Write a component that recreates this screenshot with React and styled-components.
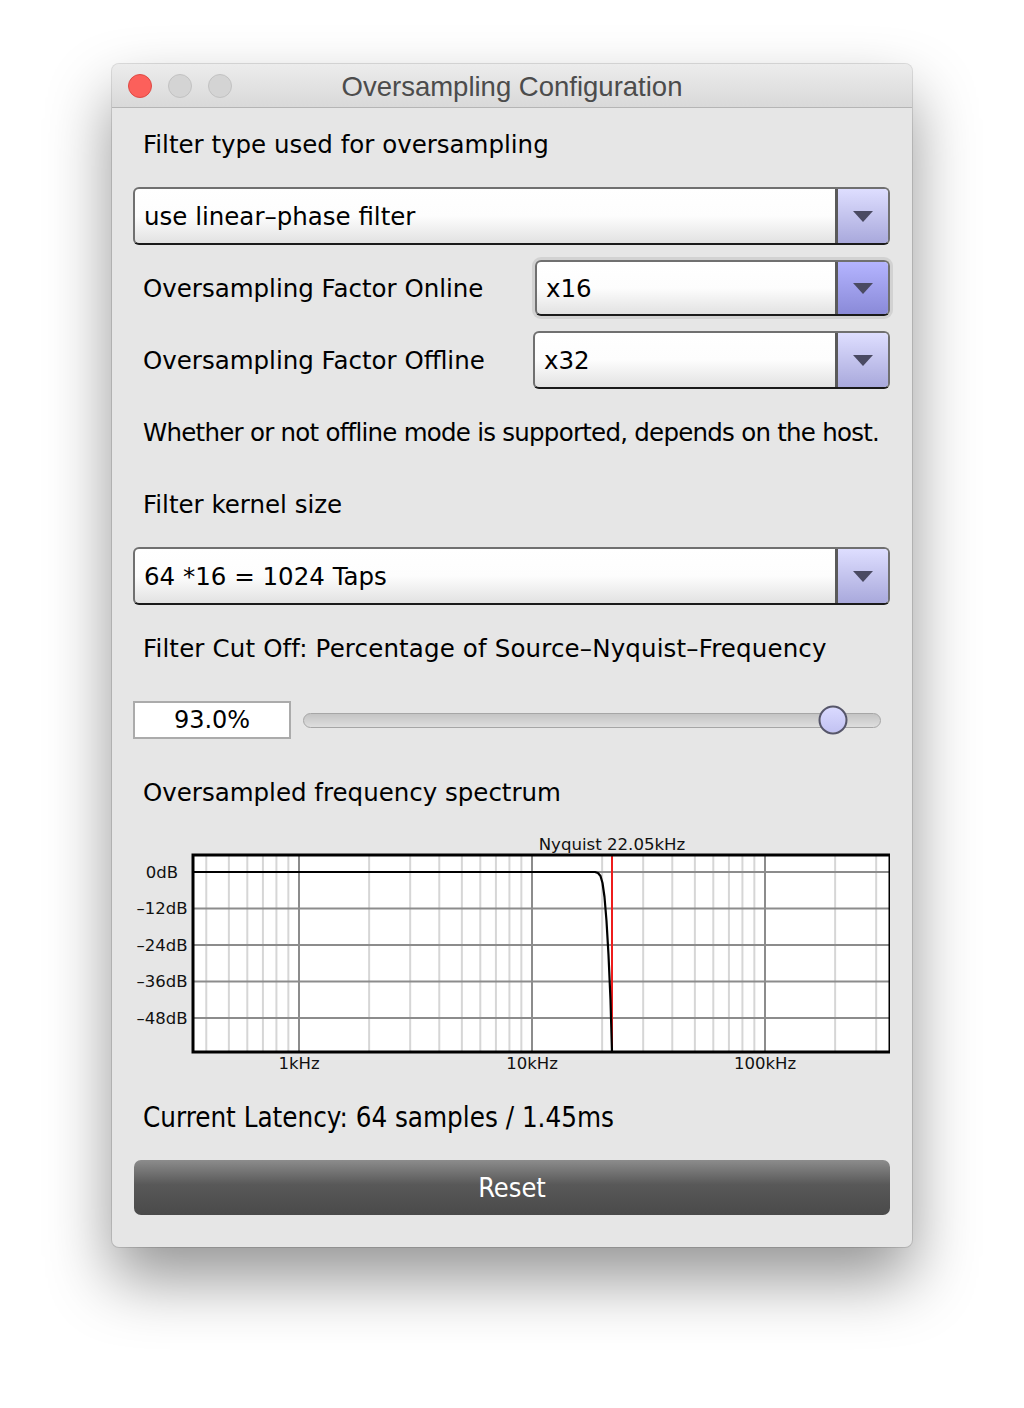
import React from "react";
import styled, { createGlobalStyle } from "styled-components";

const GlobalStyle = createGlobalStyle`
  html, body {
    margin: 0;
    padding: 0;
    background: #ffffff;
  }
  body {
    font-family: "DejaVu Sans", "Liberation Sans", sans-serif;
  }
`;

// chart geometry (pixels inside the plot area)
const PLOT_W = 697;
const PLOT_H = 197;
const DECADE = 233;
const X_1K = 106;
const xFor = (hz) => X_1K + DECADE * Math.log10(hz / 1000);
const yFor = (db) => 17 + (-db * 36.5) / 12;

const minorFreqs = [
  400, 500, 600, 700, 800, 900,
  2000, 3000, 4000, 5000, 6000, 7000, 8000, 9000,
  20000, 30000, 40000, 50000, 60000, 70000, 80000, 90000,
  200000, 300000,
];
const majorFreqs = [
  { hz: 1000, label: "1kHz" },
  { hz: 10000, label: "10kHz" },
  { hz: 100000, label: "100kHz" },
];
const dbLines = [0, -12, -24, -36, -48];

const TEXT_SIZE = 24.5;

const Page = styled.div`
  padding: 64px 0 160px 112px;
`;

const Window = styled.div`
  width: 800px;
  height: 1183px;
  background: #e6e6e6;
  border-radius: 7px;
  box-shadow: 0 0 0 1px rgba(0, 0, 0, 0.12), 0 32px 64px rgba(0, 0, 0, 0.42);
  display: flex;
  flex-direction: column;
  overflow: hidden;
`;

const TitleBar = styled.div`
  position: relative;
  height: 43px;
  flex-shrink: 0;
  display: flex;
  align-items: center;
  justify-content: center;
  background: linear-gradient(#ececec, #d9d9d9);
  border-bottom: 1px solid #b5b5b5;
`;

const Lights = styled.div`
  position: absolute;
  left: 16px;
  top: 10px;
  display: flex;
  gap: 16px;
`;

const Light = styled.span`
  width: 24px;
  height: 24px;
  border-radius: 50%;
  box-sizing: border-box;
  background: ${(p) => (p.$red ? "#fc605b" : "#d4d4d4")};
  border: 1px solid ${(p) => (p.$red ? "#de4a44" : "#c2c2c2")};
`;

const Title = styled.div`
  font-family: "Liberation Sans", Arial, sans-serif;
  font-size: 27.5px;
  color: #4c4c4c;
  margin-top: 3px;
`;

const Content = styled.div`
  display: flex;
  flex-direction: column;
  padding: 0 22px 0 21px;
`;

const Label = styled.div`
  height: 36px;
  line-height: 36px;
  margin-top: ${(p) => p.$mt}px;
  padding-left: 10px;
  font-size: ${TEXT_SIZE}px;
  letter-spacing: ${(p) => p.$spacing || 0}px;
  color: #000;
  white-space: nowrap;
`;

const ComboBox = styled.div`
  box-sizing: border-box;
  height: ${(p) => p.$h || 58}px;
  width: ${(p) => (p.$w ? `${p.$w}px` : "auto")};
  margin-top: ${(p) => p.$mt || 0}px;
  display: flex;
  border: 2px solid #707070;
  border-bottom-color: #1a1a1a;
  border-radius: 6px;
  overflow: hidden;
  background: linear-gradient(#ffffff 0%, #fdfdfd 50%, #e2e2e2 100%);
  box-shadow: ${(p) => (p.$focus ? "0 0 0 3px #d2d2d2" : "none")};
  flex-shrink: 0;
`;

const ComboText = styled.div`
  flex: 1;
  display: flex;
  align-items: center;
  padding-left: 9px;
  font-size: ${TEXT_SIZE}px;
  color: #000;
`;

const ComboArrow = styled.div`
  width: 50px;
  display: flex;
  align-items: center;
  justify-content: center;
  border-left: 3px solid #5a5a5a;
  background: ${(p) =>
    p.$active
      ? "linear-gradient(#b4b4ff, #8a8ad8)"
      : "linear-gradient(#dedeff, #a9a9dc)"};
  &::after {
    content: "";
    border-left: 10px solid transparent;
    border-right: 10px solid transparent;
    border-top: 11px solid #4a4a62;
    margin-top: 1px;
  }
`;

const Row = styled.div`
  display: flex;
  align-items: center;
  justify-content: space-between;
  height: ${(p) => p.$h}px;
  margin-top: ${(p) => p.$mt}px;
`;

const RowLabel = styled.div`
  padding-left: 10px;
  font-size: ${TEXT_SIZE}px;
  color: #000;
  white-space: nowrap;
`;

const SliderRow = styled.div`
  display: flex;
  align-items: center;
  height: 38px;
  margin-top: 34px;
`;

const ValueBox = styled.div`
  box-sizing: border-box;
  width: 158px;
  height: 38px;
  display: flex;
  align-items: center;
  justify-content: center;
  background: #fff;
  border: 2px solid #ababab;
  font-size: 24px;
  color: #000;
`;

const Track = styled.div`
  position: relative;
  flex: 1;
  height: 15px;
  margin: 0 9px 0 12px;
  box-sizing: border-box;
  border-radius: 8px;
  border: 1px solid #a6a6a6;
  background: linear-gradient(#c4c4c4, #dedede);
`;

const Thumb = styled.div`
  position: absolute;
  top: 50%;
  width: 29px;
  height: 29px;
  box-sizing: border-box;
  border-radius: 50%;
  border: 2px solid #56566a;
  background: linear-gradient(#dadaff, #c2c2f2);
  transform: translate(-50%, -50%);
`;

const ChartSvg = styled.svg`
  display: block;
  margin-top: 24px;
  font-family: "DejaVu Sans", sans-serif;
`;

const Latency = styled.div`
  height: 36px;
  line-height: 36px;
  margin-top: 24px;
  padding-left: 10px;
  font-family: "DejaVu Sans Condensed", "Liberation Sans Narrow", "DejaVu Sans", sans-serif;
  font-size: 27.5px;
  color: #000;
`;

const ResetButton = styled.button`
  height: 55px;
  margin: 25px 0 0 1px;
  border: none;
  border-radius: 7px;
  background: linear-gradient(#8c8c8c 0%, #585858 45%, #4a4a4a 100%);
  color: #fff;
  font-family: "DejaVu Sans Condensed", "Liberation Sans Narrow", "DejaVu Sans", sans-serif;
  font-size: 27px;
  font-weight: 500;
  cursor: pointer;
`;

const Combo = ({ value, active, ...rest }) => (
  <ComboBox {...rest}>
    <ComboText>{value}</ComboText>
    <ComboArrow $active={active} />
  </ComboBox>
);

// filter response: flat then a steep roll-off just before Nyquist
const curve = [
  [0, 17], [402, 17], [405, 18], [407.5, 21], [409.5, 28], [411.5, 42],
  [413.5, 66], [415.5, 100], [417.5, 145], [419, 197],
];

const Spectrum = () => {
  const ox = 60; // plot offset inside svg
  const oy = 20;
  const nyq = xFor(22050);
  return (
    <ChartSvg width="757" height="240" viewBox="0 0 757 240">
      <g transform={`translate(${ox},${oy})`}>
        <rect x="0" y="0" width={PLOT_W} height={PLOT_H} fill="#fff" />
        {minorFreqs.map((f) => (
          <line key={f} x1={xFor(f)} x2={xFor(f)} y1="0" y2={PLOT_H} stroke="#d6d6d6" strokeWidth="2" />
        ))}
        {dbLines.map((d) => (
          <line key={d} x1="0" x2={PLOT_W} y1={yFor(d)} y2={yFor(d)} stroke="#8c8c8c" strokeWidth="2" />
        ))}
        {majorFreqs.map((m) => (
          <line key={m.hz} x1={xFor(m.hz)} x2={xFor(m.hz)} y1="0" y2={PLOT_H} stroke="#8c8c8c" strokeWidth="2" />
        ))}
        <line x1={nyq} x2={nyq} y1="0" y2={PLOT_H} stroke="#ee1c1c" strokeWidth="2" />
        <polyline
          points={curve.map((p) => p.join(",")).join(" ")}
          fill="none"
          stroke="#000"
          strokeWidth="2.2"
          strokeLinejoin="round"
        />
        <rect x="0" y="0" width={PLOT_W} height={PLOT_H} fill="none" stroke="#000" strokeWidth="3" />
        <text x={nyq} y="-5" fontSize="16.6" textAnchor="middle" fill="#111">
          Nyquist 22.05kHz
        </text>
        {dbLines.map((d) => (
          <text key={d} x="-31" y={yFor(d) + 5.5} fontSize="16.5" textAnchor="middle" fill="#111">
            {d === 0 ? "0dB" : `\u2013${-d}dB`}
          </text>
        ))}
        {majorFreqs.map((m) => (
          <text key={m.hz} x={xFor(m.hz)} y={PLOT_H + 17} fontSize="16.5" textAnchor="middle" fill="#111">
            {m.label}
          </text>
        ))}
      </g>
    </ChartSvg>
  );
};

const App = () => {
  const cutoff = 0.919;
  return (
    <Page>
      <GlobalStyle />
      <Window>
        <TitleBar>
          <Lights>
            <Light $red />
            <Light />
            <Light />
          </Lights>
          <Title>Oversampling Configuration</Title>
        </TitleBar>
        <Content>
          <Label $mt={19}>Filter type used for oversampling</Label>
          <Combo $mt={24} value="use linear–phase filter" />

          <Row $h={60} $mt={13}>
            <RowLabel>Oversampling Factor Online</RowLabel>
            <Combo $w={355} $h={56} $focus active value="x16" />
          </Row>
          <Row $h={58} $mt={13}>
            <RowLabel>Oversampling Factor Offline</RowLabel>
            <Combo $w={357} value="x32" />
          </Row>

          <Label $mt={26} $spacing={-0.75}>
            Whether or not offline mode is supported, depends on the host.
          </Label>
          <Label $mt={36}>Filter kernel size</Label>
          <Combo $mt={24} value="64 *16 = 1024 Taps" />

          <Label $mt={26} $spacing={0.15}>
            Filter Cut Off: Percentage of Source–Nyquist–Frequency
          </Label>
          <SliderRow>
            <ValueBox>93.0%</ValueBox>
            <Track>
              <Thumb style={{ left: `${cutoff * 100}%` }} />
            </Track>
          </SliderRow>

          <Label $mt={36}>Oversampled frequency spectrum</Label>
          <Spectrum />

          <Latency>Current Latency: 64 samples / 1.45ms</Latency>
          <ResetButton>Reset</ResetButton>
        </Content>
      </Window>
    </Page>
  );
};

export default App;
